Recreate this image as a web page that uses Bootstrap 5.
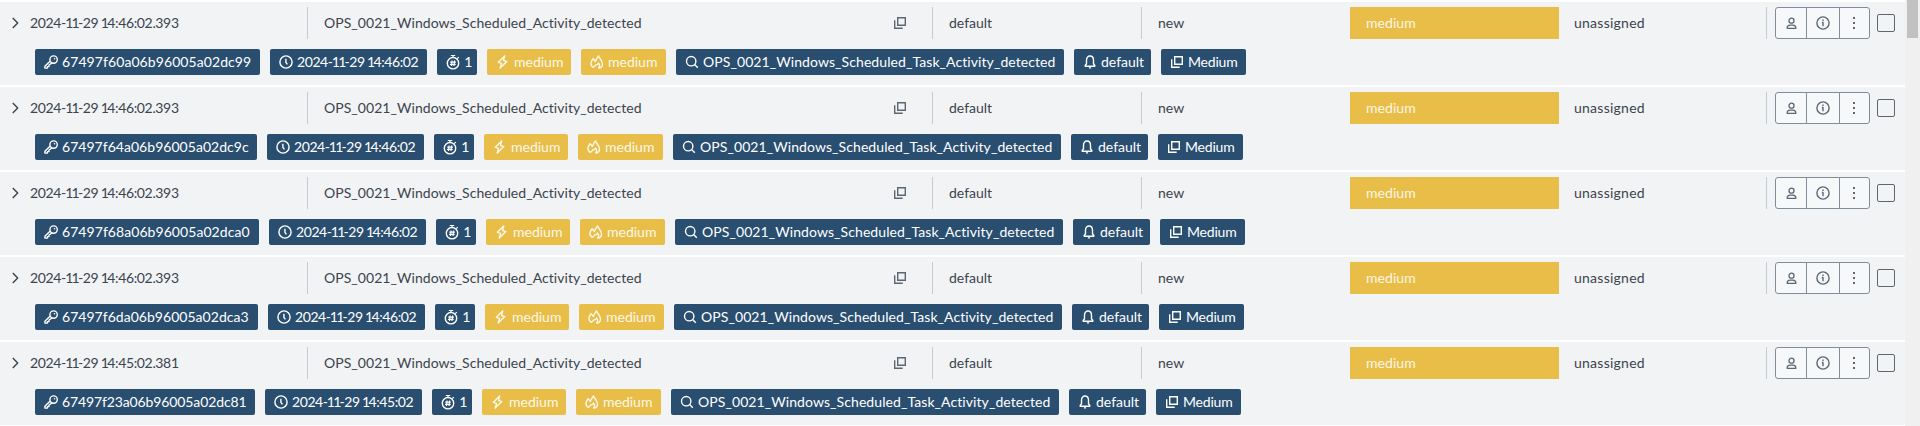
<!DOCTYPE html>
<html lang="en">
<head>
<meta charset="utf-8">
<title>Findings</title>
<link href="https://cdn.jsdelivr.net/npm/bootstrap@5.3.0/dist/css/bootstrap.min.css" rel="stylesheet">
<style>
body{font-family:Lato,"Liberation Sans",sans-serif;font-size:14px;line-height:20px;color:#3c444d;background:#fff;height:426px}
svg{display:block;flex:none;fill:none;stroke:currentColor;stroke-width:1.4;stroke-linejoin:round}
#list{padding-top:2px;gap:2px}
.event{height:83px;background:#f2f3f5;padding-top:5px}
.cells{height:32px}
.cell{border-right:1px solid #c3cbd4;white-space:nowrap;padding-bottom:1px}
.cell svg{position:relative;top:.5px}
.cell.bare{border-color:transparent}
.w-time{width:308px;padding-left:12px}
.w-title{width:625px;padding-right:25px;padding-left:16px;letter-spacing:.05px}
.w-col{width:209px;padding-left:16px}
.w-status{width:208px;padding-left:16px}
.sev{width:209px;padding:0 0 1px 16px;background:#e8be48;color:#fcf6e6;letter-spacing:.05px}
.w-owner{width:208px;padding-left:15px;letter-spacing:.25px}
.stamp{margin-left:11px;letter-spacing:-.35px}
.stamp i,.chip i{font-style:normal;letter-spacing:-1.7px;margin-left:-.8px}
.tool-group{margin-left:8px;width:95px;height:32px}
.tool{padding:0;border:1px solid #818d99;background:#f7f8fa;color:#5c6773;border-radius:3px;flex:1 1 0}
.tool svg{margin:auto}
.form-check-input.tick{width:18px;height:18px;margin:0 0 0 7px;border:1px solid #5c6773;border-radius:2px;background:transparent}
.chips{padding:10px 0 0 35px;gap:10px}
.chip{height:26px;padding:0 0 0 9px;gap:4px;border-radius:2px;background:#294e70;color:#fff;white-space:nowrap}
.chip.warn{background:#e8be48;color:#fdf8ea}
.c-clock{width:157.3px;letter-spacing:-.43px}
.c-count{width:39.7px}
.c-urg{width:84px}
.c-risk{width:85px}
.c-search{width:388px;letter-spacing:.08px}
.c-bell{width:77px}
.c-sev{width:85px;letter-spacing:-.2px}
.rail{width:15px;background:#f0f0f0;padding:0 2px}
.thumb{height:38px;background:#c1c1c1}
</style>
</head>
<body class="d-flex overflow-hidden">
<svg class="d-none">
<symbol id="key" viewBox="0 0 14 14"><circle cx="9.6" cy="4.6" r="3.7"/><circle cx="10.5" cy="3.8" r=".8" fill="currentColor" stroke="none"/><path d="M6.2 6 .9 11.3V13.100H3.400V11.600H5V10L8.200 7.900"/></symbol>
<symbol id="clock" viewBox="0 0 14 14"><circle cx="7" cy="7" r="6.1"/><path d="M6.900 3.800V7.300L8.400 9.400"/></symbol>
<symbol id="timer" viewBox="0 0 14 16"><circle cx="7" cy="9.200" r="5.700"/><path d="M4.800 1.500H9.200M7 1.500V3.500M11.200 4.700 12.800 3.100M6.100 6.500 5.500 12M8.600 6.500 8 12M4.200 8.200H9.900M4 10.400H9.700" stroke-width="1.200"/></symbol>
<symbol id="bolt" viewBox="0 0 14 14"><path d="M8.700 1 2.300 7.300 5.600 8.300 4.200 13 10.800 6.600 7.500 5.500Z"/></symbol>
<symbol id="fire" viewBox="0 0 14 14"><path d="M3.200 12.400C.4 10.500.5 7.800 2 5.300L3.200 3.800 5.400 6.500C6.200 4.600 6.700 3.100 8.500.9 8.900 3.200 12.700 5.500 12.500 9.200 12.400 11.500 10.900 13 8.600 13 10.200 11 9.700 9.300 8.400 8.100 7.900 9.600 7 10 5.800 9.800 4.900 11 4.300 12 3.200 12.400Z"/></symbol>
<symbol id="search" viewBox="0 0 14 14"><circle cx="6.200" cy="6.200" r="4.700"/><path d="M9.600 9.600 12.800 12.800"/></symbol>
<symbol id="bell" viewBox="0 0 14 14"><path d="M2.200 11.300V10.500L3.500 8.800V5.200C3.500 2.700 5 1 7 1S10.500 2.700 10.500 5.200V8.800L11.800 10.500V11.300ZM5.900 12.900H8.100"/></symbol>
<symbol id="copy" viewBox="0 0 14 14"><path d="M4.700 1.700H12.300V9.300H4.700ZM1.700 4.200V12.300H9.700" stroke-linejoin="miter"/></symbol>
<symbol id="user" viewBox="0 0 14 14"><circle cx="7" cy="4" r="2.700"/><path d="M2.400 12.300V11.300C2.400 9.800 3.700 9 5.500 8.800H8.500C10.300 9 11.600 9.800 11.600 11.300V12.300Z"/></symbol>
<symbol id="info" viewBox="0 0 14 14"><circle cx="7" cy="7" r="6.100"/><path d="M7 3.500V4.900M5.900 6.500H7V10.300"/></symbol>
<symbol id="more" viewBox="0 0 12 12"><path d="M5 0H7V2H5ZM5 5H7V7H5ZM5 10H7V12H5Z" fill="currentColor" stroke="none"/></symbol>
</svg>
<main class="flex-grow-1 d-flex flex-column" id="list"></main>
<div class="rail flex-shrink-0"><div class="thumb"></div></div>
<script src="https://cdn.jsdelivr.net/npm/bootstrap@5.3.0/dist/js/bootstrap.bundle.min.js"></script>
<script>
const icon = (n, w = 14, h = w) => `<svg width="${w}" height="${h}"><use href="#${n}"/></svg>`;
const chip = (cls, ic, text, h = 14) => `<span class="chip ${cls} d-flex align-items-center">${icon(ic, 14, h)}<span>${text}</span></span>`;
const stamp = s => s.replace('11', '<i>11</i>').replace(' 1', ' <i>1</i>');
// id, time, milliseconds, id label width, id letter spacing
const events = [
  ['67497f60a06b96005a02dc99', '2024-11-29 14:46:02', '.393', 225, .08],
  ['67497f64a06b96005a02dc9c', '2024-11-29 14:46:02', '.393', 222, .03],
  ['67497f68a06b96005a02dca0', '2024-11-29 14:46:02', '.393', 224, .06],
  ['67497f6da06b96005a02dca3', '2024-11-29 14:46:02', '.393', 223, .03],
  ['67497f23a06b96005a02dc81', '2024-11-29 14:45:02', '.381', 220, -.12]
];
document.getElementById('list').innerHTML = events.map(([id, time, ms, w, ls]) => `
<section class="event flex-shrink-0">
  <div class="cells d-flex align-items-stretch">
    <div class="cell w-time d-flex align-items-center"><svg width="7" height="12" viewBox="0 0 7 12"><path d="M.8.900 5.700 6 .8 11.100"/></svg><span class="stamp">${stamp(time)}${ms}</span></div>
    <div class="cell w-title d-flex align-items-center justify-content-between"><span>OPS_0021_Windows_Scheduled_Activity_detected</span><span style="color:#5c6773">${icon('copy')}</span></div>
    <div class="cell w-col d-flex align-items-center">default</div>
    <div class="cell bare w-status d-flex align-items-center">new</div>
    <div class="sev d-flex align-items-center">medium</div>
    <div class="cell w-owner d-flex align-items-center">unassigned</div>
    <div class="btn-group tool-group" role="group">
      <button class="btn tool d-flex" aria-label="Assign">${icon('user', 13)}</button>
      <button class="btn tool d-flex" aria-label="Details">${icon('info')}</button>
      <button class="btn tool d-flex" aria-label="More">${icon('more', 12)}</button>
    </div>
    <input class="form-check-input tick align-self-center" type="checkbox" aria-label="Select">
  </div>
  <div class="chips d-flex">
    <span class="chip d-flex align-items-center" style="width:${w}px;letter-spacing:${ls}px">${icon('key')}<span>${id}</span></span>
    ${chip('c-clock', 'clock', stamp(time))}
    ${chip('c-count', 'timer', '1', 16)}
    ${chip('c-urg warn', 'bolt', 'medium')}
    ${chip('c-risk warn', 'fire', 'medium')}
    ${chip('c-search', 'search', 'OPS_0021_Windows_Scheduled_Task_Activity_detected')}
    ${chip('c-bell', 'bell', 'default')}
    ${chip('c-sev', 'copy', 'Medium')}
  </div>
</section>`).join('');
</script>
</body>
</html>
